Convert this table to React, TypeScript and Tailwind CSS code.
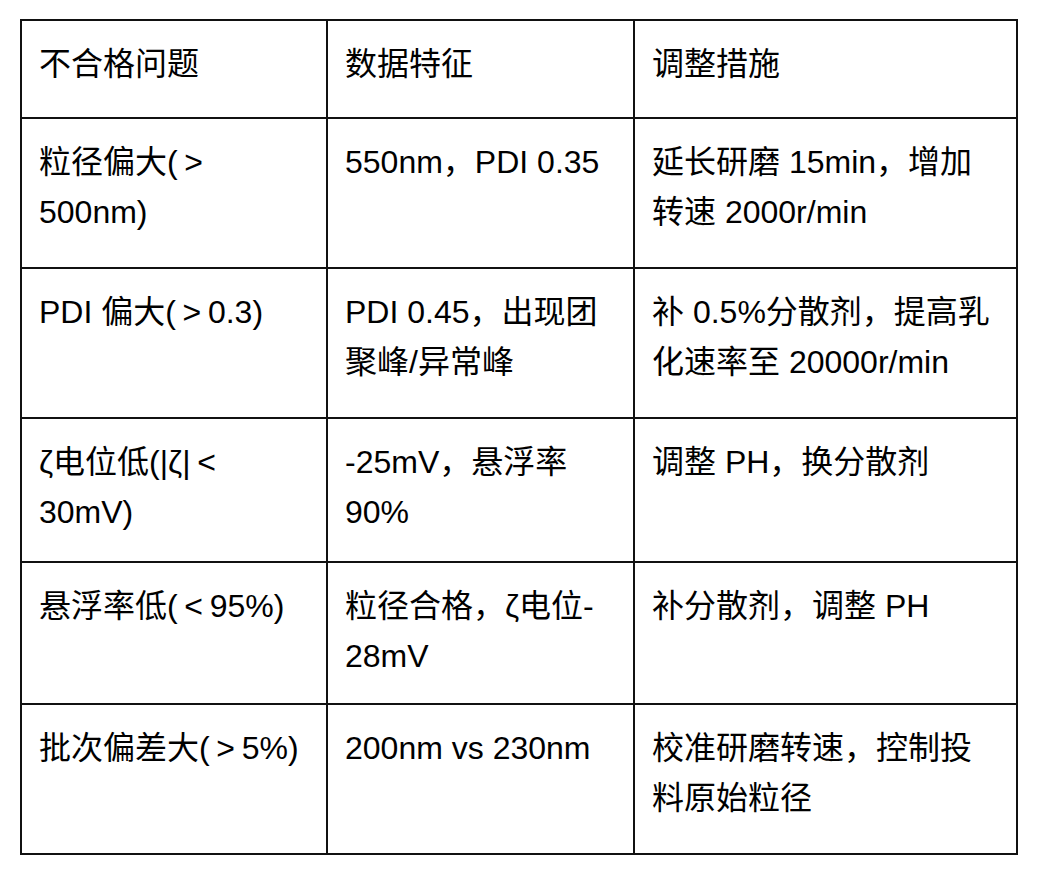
import type { ReactNode } from "react";

// fullwidth comparison sign: latin glyph centred in a 1em box, like the source font
const Cmp = ({ c }: { c: string }) => (
  <span className="inline-block w-[32px] text-center">{c}</span>
);

const rows: { h: string; cells: ReactNode[][] }[] = [
  { h: "h-[98px]", cells: [["不合格问题"], ["数据特征"], ["调整措施"]] },
  {
    h: "h-[150px]",
    cells: [
      [<>粒径偏大(<Cmp c=">" /></>, "500nm)"],
      ["550nm，PDI 0.35"],
      ["延长研磨 15min，增加", "转速 2000r/min"],
    ],
  },
  {
    h: "h-[150px]",
    cells: [
      [<>PDI 偏大(<Cmp c=">" />0.3)</>],
      ["PDI 0.45，出现团", "聚峰/异常峰"],
      ["补 0.5%分散剂，提高乳", "化速率至 20000r/min"],
    ],
  },
  {
    h: "h-[144px]",
    cells: [
      [<>ζ电位低(|ζ|<Cmp c="<" /></>, "30mV)"],
      ["-25mV，悬浮率", "90%"],
      ["调整 PH，换分散剂"],
    ],
  },
  {
    h: "h-[142px]",
    cells: [
      [<>悬浮率低(<Cmp c="<" />95%)</>],
      ["粒径合格，ζ电位-", "28mV"],
      ["补分散剂，调整 PH"],
    ],
  },
  {
    h: "h-[150px]",
    cells: [
      [<>批次偏差大(<Cmp c=">" />5%)</>],
      ["200nm vs 230nm"],
      ["校准研磨转速，控制投", "料原始粒径"],
    ],
  },
];

export default function App() {
  return (
    <div
      className="w-[1038px] h-[871px] bg-white pl-[20px] pt-[19px] text-black"
      style={{ fontFamily: '"Liberation Sans", Arial, "Noto Sans CJK SC", sans-serif' }}
    >
      <table className="table-fixed border-collapse w-[996px] text-[32px] leading-[50px]">
        <colgroup>
          <col className="w-[306px]" />
          <col className="w-[307px]" />
          <col className="w-[383px]" />
        </colgroup>
        <tbody>
          {rows.map((row, i) => (
            <tr key={i} className={row.h}>
              {row.cells.map((lines, j) => (
                <td key={j} className="border-2 border-[#111] align-top pl-[17px] pr-2 pt-[18px]">
                  {lines.map((l, k) => (
                    <div key={k} className="whitespace-nowrap">
                      {l}
                    </div>
                  ))}
                </td>
              ))}
            </tr>
          ))}
        </tbody>
      </table>
    </div>
  );
}
